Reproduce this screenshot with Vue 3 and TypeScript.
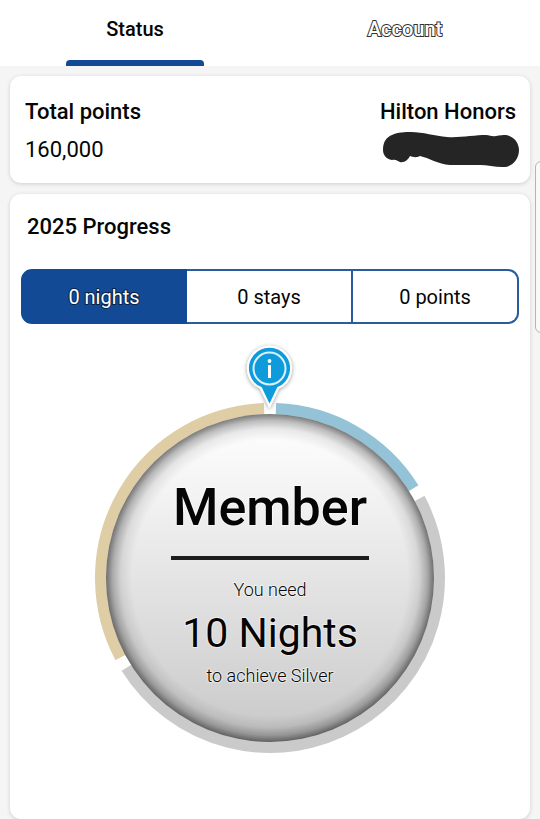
<script setup lang="ts">
import { ref } from 'vue'

interface Metric {
  id: string
  label: string
  goal: string
}

interface Arc {
  id: string
  color: string
  from: number
  to: number
}

const tabs = ['Status', 'Account']
const activeTab = ref('Status')

const metrics: Metric[] = [
  { id: 'nights', label: '0 nights', goal: '10 Nights' },
  { id: 'stays', label: '0 stays', goal: '4 Stays' },
  { id: 'points', label: '0 points', goal: '25,000 Points' },
]
const active = ref<Metric>(metrics[0])

// Angles run clockwise in degrees from the top of the dial.
const arcs: Arc[] = [
  { id: 'silver', color: '#94c2d6', from: 2, to: 58 },
  { id: 'gold', color: '#cacaca', from: 62, to: 238 },
  { id: 'diamond', color: '#dfcda6', from: 242, to: 358 },
]

function arcPath(arc: Arc): string {
  const radius = 169
  const point = (deg: number): string => {
    const a = (deg * Math.PI) / 180
    return `${270 + radius * Math.sin(a)} ${578 - radius * Math.cos(a)}`
  }
  return `M${point(arc.from)}A${radius} ${radius} 0 0 1 ${point(arc.to)}`
}
</script>

<template>
  <div class="page">
    <nav class="tabs">
      <button
        v-for="tab in tabs"
        :key="tab"
        type="button"
        class="tab"
        :class="{ active: tab === activeTab }"
        @click="activeTab = tab"
      >
        {{ tab }}
      </button>
    </nav>

    <main class="content">
      <section class="card summary">
        <div class="summary-col">
          <h2>Total points</h2>
          <p>160,000</p>
        </div>
        <div class="summary-col end">
          <h2>Hilton Honors</h2>
          <svg class="scribble" viewBox="0 0 136 37" aria-hidden="true">
            <path
              d="M0 18C0 9 4 5 9 3C15 0 22 0 28 0C40 0 52 4 64 5C76 6 92 3 103 3C107 3 109 5 113 4C117 3 120 3 123 3C131 4 136 11 136 18C136 28 128 36 119 35C112 35 104 33 97 33C87 33 77 33 67 33C55 32 46 26 37 24C33 26 30 25 27 24C25 28 21 31 17 30C14 29 13 27 9 28C3 27 0 23 0 18Z"
            />
          </svg>
        </div>
      </section>

      <section class="card progress">
        <h2>2025 Progress</h2>
        <div class="segments">
          <button
            v-for="m in metrics"
            :key="m.id"
            type="button"
            class="segment"
            :class="{ active: m.id === active.id }"
            @click="active = m"
          >
            {{ m.label }}
          </button>
        </div>

        <div class="dial">
          <svg class="dial-art" viewBox="90 340 360 420" aria-hidden="true">
            <defs>
              <linearGradient id="face" x1="0" y1="0" x2="0" y2="1">
                <stop offset="0" stop-color="#ffffff" />
                <stop offset="0.15" stop-color="#f8f8f8" />
                <stop offset="1" stop-color="#c8c8c8" />
              </linearGradient>
              <radialGradient id="rim">
                <stop offset="0.84" stop-color="#000" stop-opacity="0" />
                <stop offset="0.91" stop-color="#000" stop-opacity="0.08" />
                <stop offset="0.96" stop-color="#000" stop-opacity="0.26" />
                <stop offset="1" stop-color="#000" stop-opacity="0.52" />
              </radialGradient>
              <filter id="glow" x="-30%" y="-30%" width="160%" height="160%">
                <feDropShadow dx="0" dy="1" stdDeviation="2" flood-color="#000" flood-opacity="0.4" />
              </filter>
            </defs>
            <path
              v-for="arc in arcs"
              :key="arc.id"
              :d="arcPath(arc)"
              :stroke="arc.color"
              stroke-width="12"
              fill="none"
            />
            <circle cx="270" cy="578" r="164" fill="url(#face)" />
            <circle cx="270" cy="578" r="164" fill="url(#rim)" />
            <path
              d="M269.500 406L261 388A21.500 21.500 0 1 1 278 388Z"
              fill="#0d9bdc"
              stroke="#fff"
              stroke-width="2"
              filter="url(#glow)"
            />
            <circle cx="269.500" cy="368.500" r="16" fill="none" stroke="#d9f2fc" stroke-width="2" />
            <circle cx="269.500" cy="361" r="1.900" fill="#fff" />
            <path d="M269.500 365V378" stroke="#fff" stroke-width="3" />
          </svg>
          <div class="dial-text">
            <strong class="tier">Member</strong>
            <span class="need">You need</span>
            <span class="goal">{{ active.goal }}</span>
            <span class="need">to achieve Silver</span>
          </div>
        </div>
      </section>
    </main>
    <div class="edge-handle"></div>
  </div>
</template>

<style>
body {
  background: #f5f5f5;
}
</style>

<style scoped>
.page {
  display: flex;
  flex-direction: column;
  min-height: 100vh;
  overflow: hidden;
  position: relative;
  background: #f5f5f5;
  color: #050505;
  font-family: Roboto, 'Noto Sans', sans-serif;
}
h2,
p {
  margin: 0;
}
button {
  margin: 0;
  padding: 0;
  border: 0;
  background: none;
  color: inherit;
  font-family: inherit;
  cursor: pointer;
}
.tabs {
  display: grid;
  grid-template-columns: 1fr 1fr;
  background: #fff;
}
.tab {
  display: flex;
  flex-direction: column;
  align-items: center;
  justify-content: space-between;
  height: 66px;
  padding-top: 15px;
  font-size: 20px;
  line-height: 28px;
  font-weight: 500;
  color: #fff;
  -webkit-text-stroke: 2px #333;
  paint-order: stroke fill;
}
.tab::after {
  content: '';
  width: 138px;
  height: 6px;
  border-radius: 4px 4px 0 0;
}
.tab.active {
  color: #050505;
  -webkit-text-stroke: 0;
}
.tab.active::after {
  background: #124a96;
}
.content {
  flex: 1;
  display: flex;
  flex-direction: column;
  gap: 11px;
  padding: 10px 10px 0;
}
.card {
  background: #fff;
  border-radius: 11px;
  box-shadow: 0 1px 4px rgba(0, 0, 0, 0.16);
}
h2 {
  font-size: 22px;
  line-height: 32px;
  font-weight: 500;
}
.summary {
  display: flex;
  justify-content: space-between;
  padding: 20px 14px 14px 15px;
}
.summary-col {
  display: flex;
  flex-direction: column;
  gap: 4px;
}
.summary-col p {
  font-size: 22px;
  line-height: 36px;
}
.end {
  align-items: flex-end;
}
.scribble {
  width: 136px;
  height: 37px;
  margin-right: -3px;
  fill: #252525;
}
.progress {
  flex: 1;
  padding: 17px 11px 0;
}
.progress h2 {
  padding-left: 6px;
}
.segments {
  display: grid;
  grid-template-columns: 1fr 1fr 1fr;
  margin-top: 26px;
}
.segment {
  height: 55px;
  border: 2px solid #2a5c9c;
  border-left-width: 0;
  font-size: 20px;
  line-height: 28px;
}
.segment:first-child {
  border-left-width: 2px;
  border-radius: 11px 0 0 11px;
}
.segment:last-child {
  border-radius: 0 11px 11px 0;
}
.segment.active {
  border-color: #124a96;
  background: #124a96;
  color: #fff;
  -webkit-text-stroke: 2px #0b2344;
  paint-order: stroke fill;
}
.dial {
  display: grid;
  justify-content: center;
  margin-top: 16px;
}
.dial-art,
.dial-text {
  grid-area: 1 / 1;
}
.dial-art {
  width: 360px;
  height: 420px;
}
.dial-text {
  display: flex;
  flex-direction: column;
  align-items: center;
  padding-top: 132px;
  -webkit-text-stroke: 2px rgba(255, 255, 255, 0.5);
  paint-order: stroke fill;
}
.tier {
  padding: 0 2px 12px;
  border-bottom: 4px solid #1c1c1c;
  margin-bottom: 16px;
  font-size: 52px;
  line-height: 72px;
  font-weight: 500;
}
.need {
  font-size: 18px;
  line-height: 28px;
  font-weight: 300;
}
.goal {
  font-size: 41px;
  line-height: 58px;
}
.edge-handle {
  position: absolute;
  top: 161px;
  right: -8px;
  width: 11px;
  height: 170px;
  border: 1px solid #b4b4b4;
  border-radius: 6px;
  background: #fafafa;
}
</style>
